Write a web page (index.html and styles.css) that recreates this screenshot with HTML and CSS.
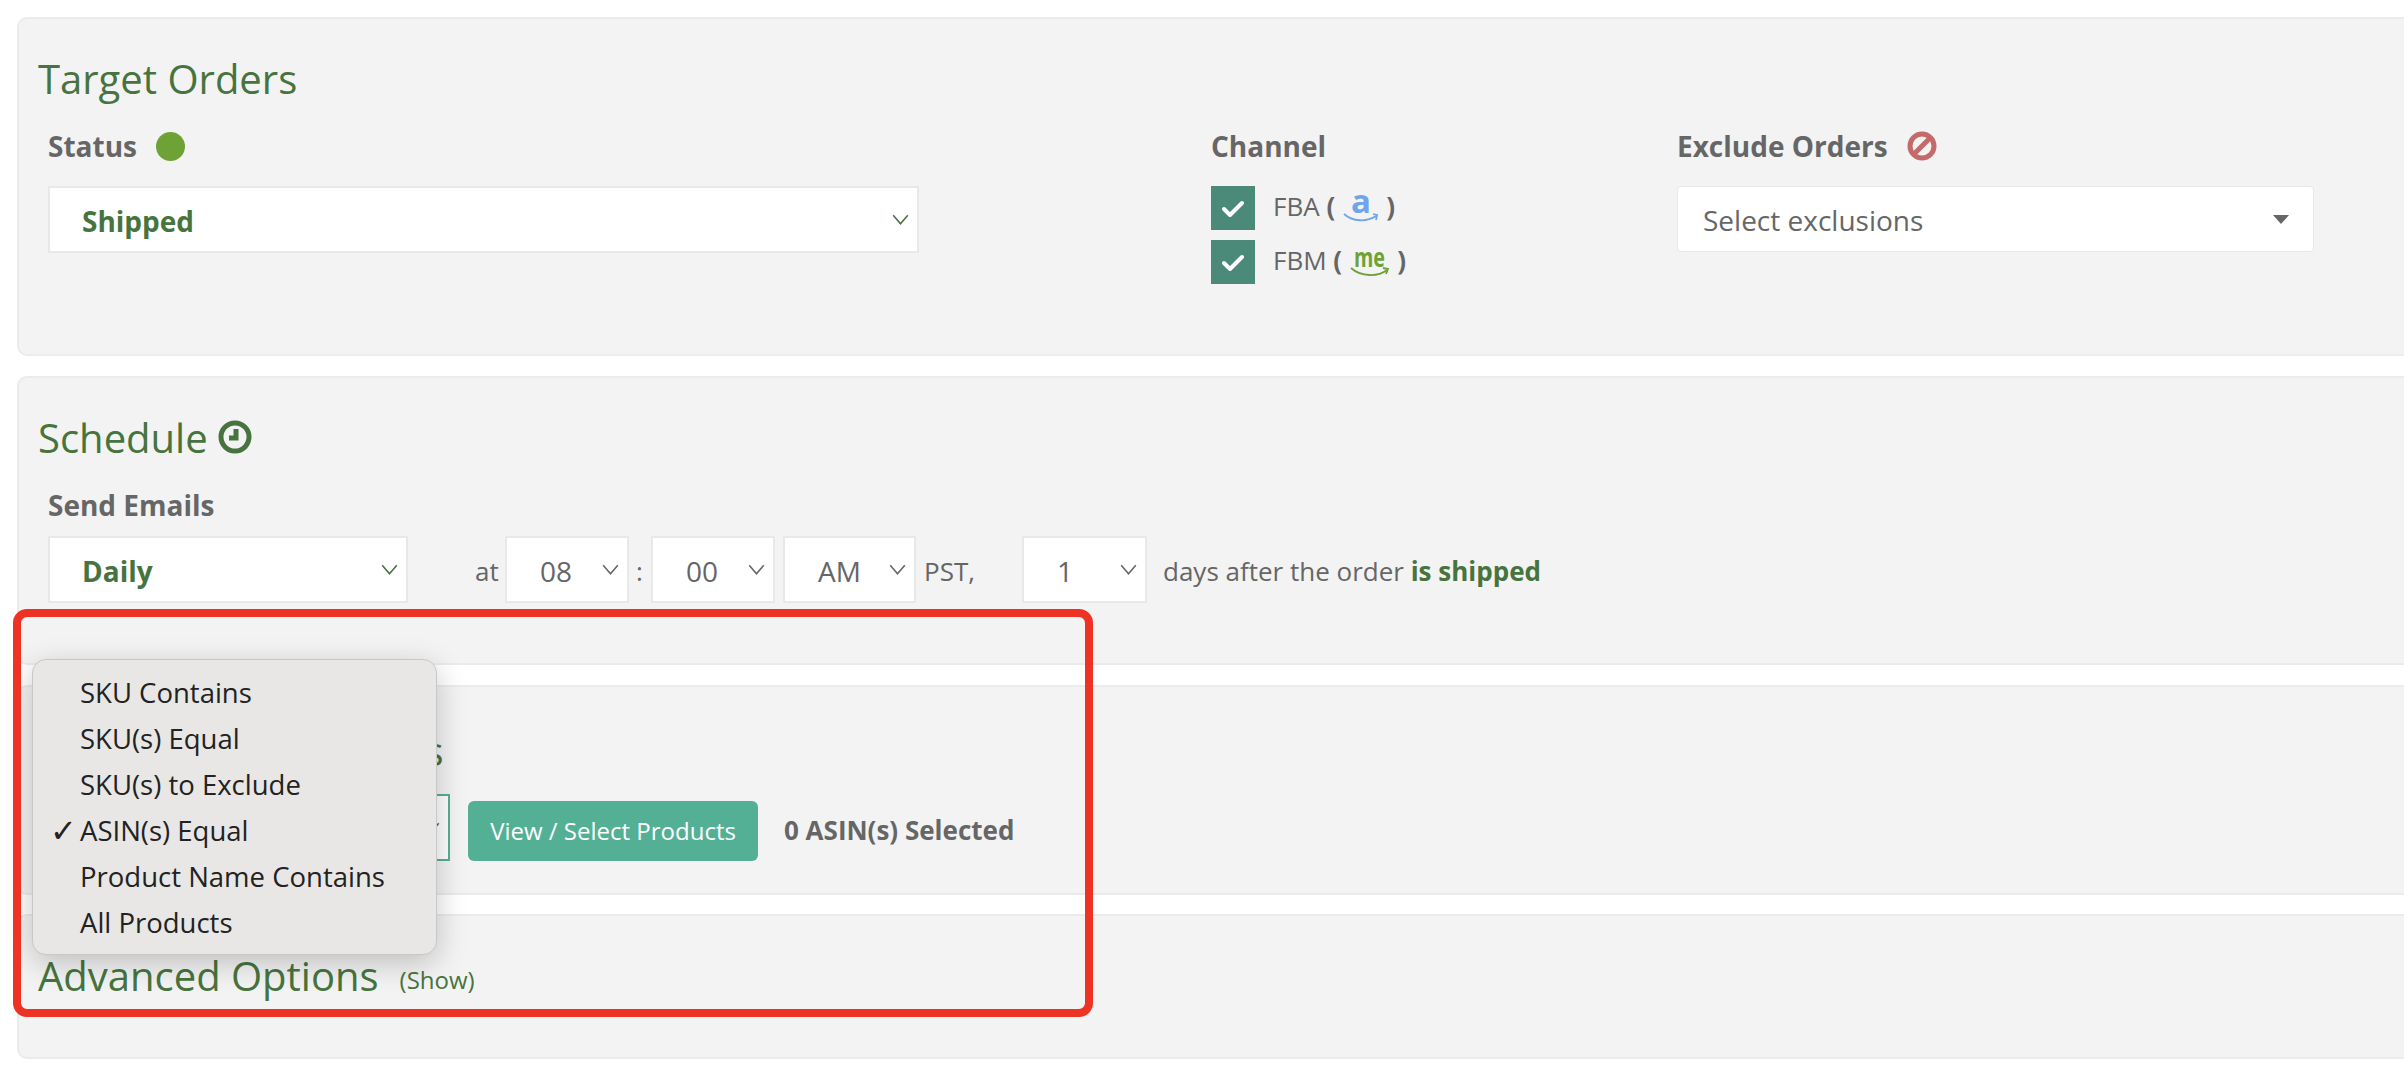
FILE: index.html
```html
<!DOCTYPE html>
<html lang="en">
<head>
    <meta charset="UTF-8">
    <title>Campaign Settings</title>
    <link rel="stylesheet" href="styles.css">
</head>
<body>
    <div class="page">
        <section class="panel panel-orders">
            <h2 class="panel-title">Target Orders</h2>
            <div class="orders-grid">
                <div class="field">
                    <div class="field-label">Status <span class="status-dot"></span></div>
                    <div class="select select-strong">
                        <span>Shipped</span>
                        <svg class="chevron" viewBox="0 0 14 9"><path d="M1 1l6 7 6-7"/></svg>
                    </div>
                </div>
                <div class="field">
                    <div class="field-label">Channel</div>
                    <div class="check-row">
                        <span class="check"><svg viewBox="0 0 24 24"><path d="M3 13l6 6L21 7"/></svg></span>
                        <span class="check-text">FBA <b>(</b></span>
                        <svg class="brand brand-a" viewBox="0 0 36 32"><text x="18" y="21" text-anchor="middle">a</text><path class="smile" d="M1 22c9 8 23 8 32 2"/><path class="smile" d="M30 22l4 1-1 5"/></svg>
                        <b class="check-text">)</b>
                    </div>
                    <div class="check-row">
                        <span class="check"><svg viewBox="0 0 24 24"><path d="M3 13l6 6L21 7"/></svg></span>
                        <span class="check-text">FBM <b>(</b></span>
                        <svg class="brand brand-me" viewBox="0 0 40 32"><text x="4" y="21" textLength="31" lengthAdjust="spacingAndGlyphs">me</text><path class="smile" d="M1 22c10 9 27 9 36 2"/><path class="smile" d="M33 22l5 1-2 5"/></svg>
                        <b class="check-text">)</b>
                    </div>
                </div>
                <div class="field">
                    <div class="field-label">Exclude Orders
                        <svg class="ban-icon" viewBox="0 0 30 30"><circle cx="15" cy="15" r="12"/><path d="M7 23L23 7"/></svg>
                    </div>
                    <div class="select select-plain">
                        <span>Select exclusions</span>
                        <span class="caret"></span>
                    </div>
                </div>
            </div>
        </section>

        <section class="panel panel-schedule">
            <h2 class="panel-title">Schedule
                <svg class="clock-icon" viewBox="0 0 34 34"><circle cx="17" cy="17" r="14"/><path d="M18 9v9h-7"/></svg>
            </h2>
            <div class="field-label label-tight">Send Emails</div>
            <div class="schedule-row">
                <div class="select select-strong select-daily">
                    <span>Daily</span>
                    <svg class="chevron" viewBox="0 0 14 9"><path d="M1 1l6 7 6-7"/></svg>
                </div>
                <span class="row-text at-text">at</span>
                <div class="select select-time select-hour">
                    <span>08</span>
                    <svg class="chevron chevron-grey" viewBox="0 0 14 9"><path d="M1 1l6 7 6-7"/></svg>
                </div>
                <span class="row-text colon-text">:</span>
                <div class="select select-time select-minute">
                    <span>00</span>
                    <svg class="chevron chevron-grey" viewBox="0 0 14 9"><path d="M1 1l6 7 6-7"/></svg>
                </div>
                <div class="select select-time select-ampm">
                    <span>AM</span>
                    <svg class="chevron chevron-grey" viewBox="0 0 14 9"><path d="M1 1l6 7 6-7"/></svg>
                </div>
                <span class="row-text pst-text">PST,</span>
                <div class="select select-time select-days">
                    <span>1</span>
                    <svg class="chevron chevron-grey" viewBox="0 0 14 9"><path d="M1 1l6 7 6-7"/></svg>
                </div>
                <span class="row-text days-text">days after the order <strong>is shipped</strong></span>
            </div>
        </section>

        <section class="panel panel-products">
            <h2 class="panel-title">Select Target Products</h2>
            <div class="products-row">
                <div class="select select-teal">
                    <span>ASIN(s) Equal</span>
                    <svg class="chevron chevron-grey" viewBox="0 0 14 9"><path d="M1 1l6 7 6-7"/></svg>
                </div>
                <button type="button" class="view-button">View / Select Products</button>
                <span class="selected-count">0 ASIN(s) Selected</span>
            </div>
        </section>

        <section class="panel panel-advanced">
            <h2 class="panel-title">Advanced Options <a href="#" class="show-link">(Show)</a></h2>
        </section>
    </div>

    <ul class="popup-menu">
        <li>SKU Contains</li>
        <li>SKU(s) Equal</li>
        <li>SKU(s) to Exclude</li>
        <li class="checked">ASIN(s) Equal</li>
        <li>Product Name Contains</li>
        <li>All Products</li>
    </ul>

    <div class="highlight-box"></div>
</body>
</html>
```

FILE: styles.css
```css
* {
    margin: 0;
    padding: 0;
    box-sizing: border-box;
}

html, body {
    height: 100%;
    overflow: hidden;
}

body {
    position: relative;
    background-color: #fff;
    color: #666;
    font-family: 'Open Sans', sans-serif;
    font-size: 28px;
}

.page {
    padding: 17px 0 0 17px;
    margin-right: -30px;
}

.panel {
    background-color: #f3f3f3;
    border: 2px solid #ebebeb;
    border-radius: 10px;
    padding-left: 19px;
    margin-bottom: 20px;
}

.panel-orders {
    height: 339px;
    padding-top: 34px;
}

.panel-schedule {
    height: 289px;
    padding-top: 34px;
}

.panel-products {
    height: 210px;
    padding-top: 38px;
    margin-bottom: 19px;
}

.panel-advanced {
    height: 145px;
    padding-top: 34px;
}

.panel-title {
    display: flex;
    align-items: center;
    gap: 10px;
    height: 50px;
    font-size: 40px;
    font-weight: 400;
    color: #47743e;
    white-space: nowrap;
}

.panel-products .panel-title {
    letter-spacing: -0.5px;
}

.orders-grid {
    display: grid;
    grid-template-columns: 1163px 466px 637px;
    margin: 25px 0 0 10px;
}

.field-label {
    display: flex;
    align-items: center;
    gap: 19px;
    height: 36px;
    margin-bottom: 22px;
    font-size: 28px;
    font-weight: 700;
    white-space: nowrap;
}

.label-tight {
    margin: 25px 0 13px 10px;
}

.status-dot {
    width: 29px;
    height: 29px;
    border-radius: 50%;
    background-color: #6ea237;
}

.ban-icon {
    width: 30px;
    height: 30px;
    fill: none;
    stroke: #c56a6a;
    stroke-width: 5;
}

.clock-icon {
    width: 34px;
    height: 34px;
    fill: none;
    stroke: #47743e;
    stroke-width: 5;
}

.select {
    display: flex;
    align-items: center;
    justify-content: space-between;
    height: 67px;
    padding-top: 2px;
    background-color: #fff;
    border: 2px solid #e8e8e8;
    white-space: nowrap;
}

.select .chevron {
    margin-top: -2px;
}

.field > .select-strong {
    width: 871px;
}

.select-strong {
    padding-left: 32px;
    padding-right: 8px;
    color: #47743e;
    font-weight: 700;
}

.select-plain {
    width: 637px;
    height: 66px;
    padding-left: 25px;
    padding-right: 24px;
    border-width: 1px;
    border-radius: 4px;
}

.caret {
    margin-top: -2px;
    border-top: 9px solid #666;
    border-left: 8px solid transparent;
    border-right: 8px solid transparent;
}

.chevron {
    flex-shrink: 0;
    width: 17px;
    height: 11px;
    fill: none;
    stroke: #47743e;
    stroke-width: 1.3;
}

.chevron-grey {
    stroke: #666;
}

.check-row {
    display: flex;
    align-items: center;
    height: 44px;
    margin-bottom: 10px;
}

.check {
    display: flex;
    align-items: center;
    justify-content: center;
    width: 44px;
    height: 44px;
    margin-right: 18px;
    background-color: #4b8a78;
}

.check svg {
    width: 24px;
    height: 24px;
    fill: none;
    stroke: #fff;
    stroke-width: 4;
    stroke-linecap: round;
    stroke-linejoin: round;
}

.check-text {
    margin-bottom: 5px;
    font-size: 26px;
}

.brand {
    height: 32px;
    margin: 0 7px 0 8px;
    overflow: visible;
}

.brand-a {
    width: 36px;
}

.brand-me {
    width: 40px;
}

.brand text {
    font-family: 'Open Sans', sans-serif;
    font-weight: 700;
}

.brand-a text {
    font-size: 33px;
    fill: #6ea5ec;
}

.brand-me text {
    font-size: 26px;
    fill: #6ea237;
}

.smile {
    fill: none;
    stroke-width: 1.8;
}

.brand-a .smile {
    stroke: #6ea5ec;
}

.brand-me .smile {
    stroke: #6ea237;
}

.schedule-row {
    display: flex;
    align-items: center;
    margin-left: 10px;
}

.select-daily {
    width: 360px;
}

.select-time {
    padding-left: 33px;
    padding-right: 8px;
}

.select-hour,
.select-minute {
    width: 124px;
}

.select-ampm {
    width: 133px;
    margin-left: 8px;
    padding-left: 33px;
}

.select-days {
    width: 125px;
}

.row-text {
    white-space: nowrap;
    font-size: 26px;
    margin-top: 2px;
}

.at-text {
    width: 30px;
    margin-left: 67px;
}

.colon-text {
    width: 22px;
    padding-left: 7px;
}

.pst-text {
    width: 98px;
    margin-left: 8px;
}

.days-text {
    margin-left: 16px;
}

.days-text strong {
    color: #47743e;
}

.products-row {
    display: flex;
    align-items: flex-end;
    margin: 19px 0 0 10px;
}

.select-teal {
    width: 402px;
    height: 67px;
    padding-left: 32px;
    padding-right: 8px;
    border-color: #54b095;
    font-size: 26px;
}

.view-button {
    width: 290px;
    height: 60px;
    margin-left: 18px;
    padding-bottom: 2px;
    background-color: #54b095;
    border: none;
    border-radius: 6px;
    color: #fff;
    font-family: inherit;
    font-size: 24px;
}

.selected-count {
    align-self: center;
    margin: 4px 0 0 26px;
    font-size: 26px;
    font-weight: 700;
    white-space: nowrap;
}

.panel-advanced .panel-title {
    gap: 21px;
}

.show-link {
    margin-top: 8px;
    font-size: 24px;
    color: #47743e;
    text-decoration: none;
}

.popup-menu {
    position: absolute;
    left: 32px;
    top: 659px;
    width: 405px;
    height: 296px;
    padding-top: 10px;
    list-style: none;
    background-color: #e8e7e5;
    border: 1px solid #c9c8c6;
    border-radius: 14px;
    box-shadow: 0 8px 30px rgba(0, 0, 0, 0.22);
    color: #222;
    font-family: 'Open Sans', sans-serif;
    font-size: 27.5px;
}

.popup-menu li {
    position: relative;
    height: 46px;
    line-height: 46px;
    padding-left: 47px;
    white-space: nowrap;
}

.popup-menu .checked::before {
    content: "✓";
    position: absolute;
    left: 17px;
    font-family: 'DejaVu Sans', sans-serif;
    font-size: 32px;
    font-weight: 700;
}

.highlight-box {
    position: absolute;
    left: 13px;
    top: 609px;
    width: 1080px;
    height: 408px;
    border: 8px solid #ee3224;
    border-radius: 14px;
    pointer-events: none;
}
```
